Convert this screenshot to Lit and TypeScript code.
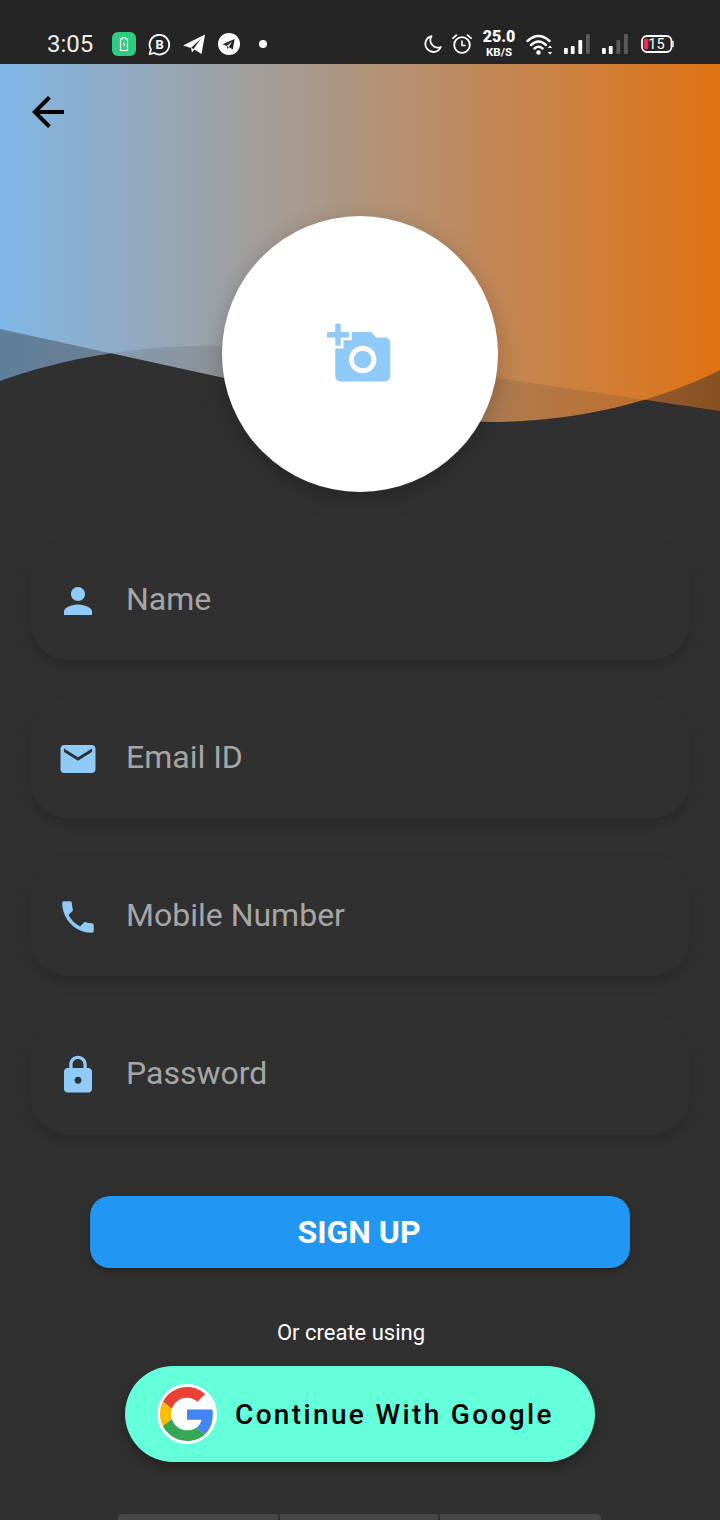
import { LitElement, html, css, svg } from "lit";
import { customElement } from "lit/decorators.js";

const ICONS: Record<string, string> = {
  person: "M12 12c2.21 0 4-1.79 4-4s-1.79-4-4-4-4 1.79-4 4 1.79 4 4 4zm0 2c-2.67 0-8 1.34-8 4v2h16v-2c0-2.66-5.33-4-8-4z",
  email: "M20 4H4c-1.1 0-1.99.9-1.99 2L2 18c0 1.1.9 2 2 2h16c1.1 0 2-.9 2-2V6c0-1.1-.9-2-2-2zm0 4l-8 5-8-5V6l8 5 8-5v2z",
  phone: "M6.62 10.79c1.44 2.83 3.76 5.14 6.59 6.59l2.2-2.2c.27-.27.67-.36 1.02-.24 1.12.37 2.33.57 3.57.57.55 0 1 .45 1 1V20c0 .55-.45 1-1 1-9.39 0-17-7.61-17-17 0-.55.45-1 1-1h3.5c.55 0 1 .45 1 1 0 1.25.2 2.45.57 3.57.11.35.03.74-.25 1.02l-2.2 2.2z",
  lock: "M18 8h-1V6c0-2.76-2.24-5-5-5S7 3.24 7 6v2H6c-1.1 0-2 .9-2 2v10c0 1.1.9 2 2 2h12c1.1 0 2-.9 2-2V10c0-1.1-.9-2-2-2zm-6 9c-1.1 0-2-.9-2-2s.9-2 2-2 2 .9 2 2-.9 2-2 2zm3.1-9H8.9V6c0-1.71 1.39-3.1 3.1-3.1 1.71 0 3.1 1.39 3.1 3.1v2z",
};

const FIELDS = [
  { icon: "person", label: "Name" },
  { icon: "email", label: "Email ID" },
  { icon: "phone", label: "Mobile Number" },
  { icon: "lock", label: "Password" },
];

const LINE = "M0 329L224 378L498 378L720 411V540H0Z";
const CURVE = "M0 381C70 356 150 344 222 346C330 352 400 422 490 422C570 422 650 405 720 370V540H0Z";

@customElement("app-root")
export class AppRoot extends LitElement {
  static styles = css`
    :host { display: block; width: 720px; height: 1520px; font-family: Roboto, "Liberation Sans", sans-serif; }
    .page { width: 720px; height: 1520px; background: #303030; display: flex; flex-direction: column; overflow: hidden; position: relative; }
    .status { height: 64px; flex: none; background: #252525; display: flex; align-items: center; color: #fff; box-sizing: border-box; padding: 24px 0 0 47px; }
    .time { font-size: 24px; width: 65px; color: #eee; font-weight: 400; }
    .s { display: block; flex: none; }
    .s2 { margin-left: 11px; }
    .s3 { margin-left: 12px; }
    .s4 { margin-left: 13px; }
    .s5 { margin-left: 19px; }
    .moon { margin-left: 157px; }
    .alarm { margin-left: 10px; }
    .speed { margin-left: 10px; width: 34px; display: flex; flex-direction: column; align-items: center; gap: 3px; font-weight: 700; line-height: 1; }
    .speed b { font-size: 16px; line-height: 14px; }
    .speed i { font-style: normal; font-size: 11.5px; line-height: 11px; }
    .wifi { margin-left: 10px; }
    .sig1 { margin-left: 11px; }
    .sig2 { margin-left: 12px; }
    .batt { margin-left: 13px; }

    .hero { position: relative; height: 476px; flex: none; display: flex; flex-direction: column; }
    .art { position: absolute; left: 0; top: 0; width: 720px; height: 476px; }
    .back { position: relative; display: block; margin: 24px 0 0 24px; width: 48px; height: 48px; fill: #000; }
    .avatar { position: relative; margin: 80px auto 0; width: 276px; height: 276px; border-radius: 50%; background: #fff; box-shadow: 0 6px 24px rgba(0,0,0,.22); display: flex; align-items: center; justify-content: center; }
    .cam { width: 66px; height: 66px; fill: #90caf9; }

    .fields { display: flex; flex-direction: column; gap: 38px; padding: 0 30px; }
    .field { height: 120px; border-radius: 38px; background: #303030; box-shadow: 0 8px 14px rgba(0,0,0,.14); display: flex; align-items: center; gap: 27px; padding-left: 27px; }
    .field svg { width: 42px; height: 42px; fill: #90caf9; flex: none; margin-top: 2px; }
    .field span { font-size: 32px; color: #a6a6a6; margin-bottom: 2px; }

    .signup { margin: 62px auto 0; width: 540px; height: 72px; flex: none; box-sizing: border-box; padding-right: 2px; border-radius: 20px; background: #2196f3; color: #fff; font-weight: 700; font-size: 32px; display: flex; align-items: center; justify-content: center; box-shadow: 0 3px 6px rgba(0,0,0,.3); }
    .or { margin: 51px 18px 0 0; height: 28px; line-height: 28px; text-align: center; font-size: 22px; color: #fff; flex: none; }
    .google { margin: 19px auto 0; width: 470px; height: 96px; flex: none; box-sizing: border-box; padding-left: 32px; border-radius: 48px; background: #64ffda; display: flex; align-items: center; gap: 18px; box-shadow: 0 6px 12px rgba(0,0,0,.3); }
    .logo { width: 60px; height: 60px; border-radius: 50%; background: #fff; display: flex; align-items: center; justify-content: center; flex: none; }
    .logo svg { width: 54px; height: 54px; display: block; }
    .google span { font-size: 28px; font-weight: 500; letter-spacing: 2.35px; color: #000; white-space: nowrap; }
    .nav { margin: 52px 0 0 118px; display: flex; gap: 2px; height: 6px; flex: none; }
    .nav div { height: 6px; background: #474747; }
    .nav div:nth-child(1) { width: 160px; border-radius: 4px 0 0 0; }
    .nav div:nth-child(2) { width: 158px; }
    .nav div:nth-child(3) { width: 161px; border-radius: 0 4px 0 0; }
  `;

  private art() {
    return html`<svg class="art" viewBox="0 64 720 476">
      <defs>
        <linearGradient id="bg" x1="0" x2="1" y1="0" y2="0">
          <stop offset="0" stop-color="#80b7e7" />
          <stop offset="1" stop-color="#e07214" />
        </linearGradient>
        <linearGradient id="la" gradientUnits="userSpaceOnUse" x1="0" x2="720" y1="0" y2="0">
          <stop offset="0" stop-color="#303030" stop-opacity=".42" />
          <stop offset="0.7" stop-color="#303030" stop-opacity=".14" />
          <stop offset="1" stop-color="#303030" stop-opacity=".14" />
        </linearGradient>
        <linearGradient id="ca" gradientUnits="userSpaceOnUse" x1="0" x2="720" y1="0" y2="0">
          <stop offset="0" stop-color="#303030" stop-opacity=".14" />
          <stop offset="0.6" stop-color="#303030" stop-opacity=".14" />
          <stop offset="1" stop-color="#303030" stop-opacity=".5" />
        </linearGradient>
        <clipPath id="lc"><path d=${LINE} /></clipPath>
      </defs>
      <rect x="0" y="64" width="720" height="476" fill="url(#bg)" />
      <path d=${LINE} fill="url(#la)" />
      <path d=${CURVE} fill="url(#ca)" />
      <path d=${CURVE} fill="#303030" clip-path="url(#lc)" />
    </svg>`;
  }

  private statusBar() {
    return html`<div class="status">
      <span class="time">3:05</span>
      <svg class="s" width="24" height="24" viewBox="0 0 24 24">
        <rect width="24" height="24" rx="6" fill="#2ecc80" />
        <path d="M8.5 7h2V5.6h3V7h2v11.5h-7z" fill="none" stroke="#fff" stroke-width="1.2" />
        <path d="M12.6 9l-2 3.6h1.4l-.6 3 2-3.6H12z" fill="#fff" />
      </svg>
      <svg class="s s2" width="24" height="24" viewBox="0 0 24 24">
        <path d="M2.6 22.2l1.3-4.6A9.8 9.8 0 1 1 7.2 21z" fill="none" stroke="#fff" stroke-width="1.8" stroke-linejoin="round" />
        <text x="12.6" y="16.6" text-anchor="middle" font-family="Roboto, sans-serif" font-size="13" font-weight="700" fill="#fff">B</text>
      </svg>
      <svg class="s s3" width="22" height="22" viewBox="0 0 22 22">
        <path d="M0 12.5L22 1.5 18.5 21 11.5 16.5 9 19.5 8 15z" fill="#fff" />
        <path d="M8 15L18 5.5 10.5 16z" fill="#252525" />
      </svg>
      <svg class="s s4" width="22" height="22" viewBox="0 0 22 22">
        <circle cx="11" cy="11" r="11" fill="#fff" />
        <path d="M4.5 11.2L16.6 6 14.8 16.4 10.8 14 9.4 16.2 8.8 13z" fill="#252525" />
        <path d="M8.8 13L14 8.4 10.8 14z" fill="#fff" />
      </svg>
      <svg class="s s5" width="8" height="8" viewBox="0 0 8 8"><circle cx="4" cy="4" r="4" fill="#fff" /></svg>
      <svg class="s moon" width="18" height="18" viewBox="0 0 18 18">
        <path d="M7.5 1.2A8 8 0 1 0 16.8 12 7.5 7.5 0 0 1 7.5 1.2z" fill="none" stroke="#fff" stroke-width="1.8" stroke-linejoin="round" />
      </svg>
      <svg class="s alarm" width="20" height="20" viewBox="0 0 20 20">
        <circle cx="10" cy="11" r="7.8" fill="none" stroke="#fff" stroke-width="1.8" />
        <path d="M10 6.5V11.5H13.5" fill="none" stroke="#fff" stroke-width="1.6" />
        <path d="M1 4.2L4.4 1.2M19 4.2L15.6 1.2" stroke="#fff" stroke-width="1.8" stroke-linecap="round" />
      </svg>
      <div class="speed"><b>25.0</b><i>KB/S</i></div>
      <svg class="s wifi" width="27" height="21" viewBox="0 0 27 21">
        <path d="M1.5 7Q12.5 -3 23.5 7M5 11Q12.5 4 20 11M8.5 14.5Q12.5 11 16.5 14.5" fill="none" stroke="#fff" stroke-width="2.4" stroke-linecap="round" />
        <circle cx="12.5" cy="18.5" r="2.2" fill="#fff" />
        <path d="M24 11.5l-2.2 2.6h4.4zM24 20.5l-2.2-2.6h4.4z" fill="#fff" />
      </svg>
      ${[0, 1].map(
        (i) => html`<svg class="s ${i ? "sig2" : "sig1"}" width="26" height="20" viewBox="0 0 26 20">
          <rect x="0" y="14" width="3.8" height="6" rx="1" fill="#fff" />
          <rect x="6.8" y="12" width="3.8" height="8" rx="1" fill="#fff" />
          <rect x="14.4" y="6" width="3.8" height="14" rx="1" fill=${i ? "#5a5a5a" : "#fff"} />
          <rect x="22" y="0" width="3.8" height="20" rx="1" fill="#5a5a5a" />
        </svg>`
      )}
      <svg class="s batt" width="33" height="18" viewBox="0 0 33 18">
        <rect x="1" y="1" width="29.5" height="16" rx="5" fill="none" stroke="#fff" stroke-width="1.8" />
        <rect x="2.8" y="3.4" width="4.6" height="11.2" rx="2" fill="#e8304a" />
        <path d="M32 6.5v5" stroke="#fff" stroke-width="1.4" stroke-linecap="round" />
        <text x="15.5" y="14" text-anchor="middle" font-family="Roboto, sans-serif" font-size="14.5" fill="#fff">15</text>
      </svg>
    </div>`;
  }

  render() {
    return html`<div class="page">
      ${this.statusBar()}
      <section class="hero">
        ${this.art()}
        <svg class="back" viewBox="0 0 24 24"><path d="M20 11H7.83l5.59-5.59L12 4l-8 8 8 8 1.41-1.41L7.83 13H20v-2z" /></svg>
        <div class="avatar">
          <svg class="cam" viewBox="0 0 24 24"><path d="M3 4V1h2v3h3v2H5v3H3V6H0V4h3zm3 6V7h3V4h7l1.83 2H21c1.1 0 2 .9 2 2v12c0 1.1-.9 2-2 2H5c-1.1 0-2-.9-2-2V10h3zm7 9c2.76 0 5-2.24 5-5s-2.24-5-5-5-5 2.24-5 5 2.24 5 5 5zm-3.2-5c0 1.77 1.43 3.2 3.2 3.2s3.2-1.43 3.2-3.2-1.43-3.2-3.2-3.2-3.2 1.43-3.2 3.2z" /></svg>
        </div>
      </section>
      <div class="fields">
        ${FIELDS.map(
          (f) => html`<div class="field">
            <svg viewBox="0 0 24 24">${svg`<path d=${ICONS[f.icon]} />`}</svg>
            <span>${f.label}</span>
          </div>`
        )}
      </div>
      <div class="signup">SIGN UP</div>
      <div class="or">Or create using</div>
      <div class="google">
        <div class="logo">
          <svg viewBox="0 0 48 48">
            <path fill="#EA4335" d="M24 9.5c3.54 0 6.71 1.22 9.21 3.6l6.85-6.85C35.9 2.38 30.47 0 24 0 14.62 0 6.51 5.38 2.56 13.22l7.98 6.19C12.43 13.72 17.74 9.5 24 9.5z" />
            <path fill="#4285F4" d="M46.98 24.55c0-1.57-.15-3.09-.38-4.55H24v9.02h12.94c-.58 2.96-2.26 5.48-4.78 7.18l7.73 6c4.51-4.18 7.09-10.36 7.09-17.65z" />
            <path fill="#FBBC05" d="M10.53 28.59c-.48-1.45-.76-2.99-.76-4.59s.27-3.14.76-4.59l-7.98-6.19C.92 16.46 0 20.12 0 24c0 3.88.92 7.54 2.56 10.78l7.97-6.19z" />
            <path fill="#34A853" d="M24 48c6.48 0 11.93-2.13 15.89-5.81l-7.73-6c-2.15 1.45-4.92 2.3-8.16 2.3-6.26 0-11.57-4.22-13.47-9.91l-7.98 6.19C6.51 42.62 14.62 48 24 48z" />
          </svg>
        </div>
        <span>Continue With Google</span>
      </div>
      <div class="nav"><div></div><div></div><div></div></div>
    </div>`;
  }
}
